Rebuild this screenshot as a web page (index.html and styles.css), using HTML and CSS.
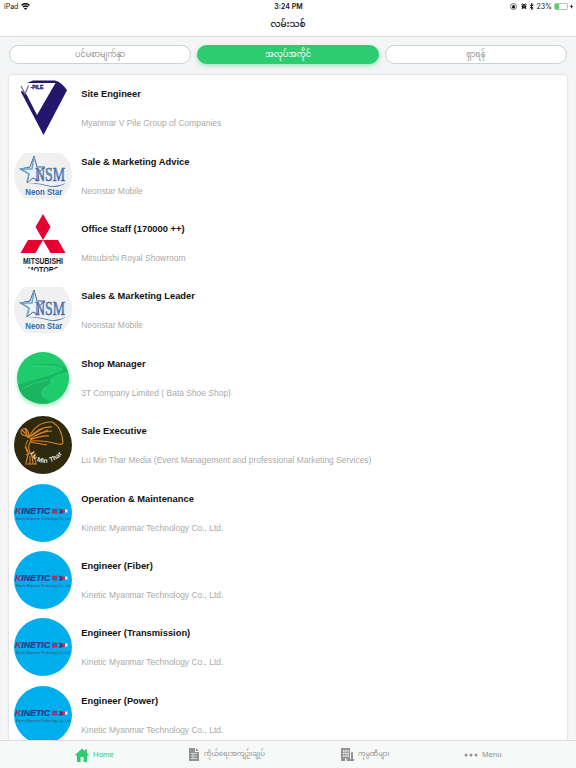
FILE: index.html
```html
<!doctype html>
<html lang="my">
<head>
<meta charset="utf-8">
<title>လမ်းသစ်</title>
<link rel="stylesheet" href="styles.css">
</head>
<body>
<svg class="symbols">
	<linearGradient id="nsm" x1="0" y1="0" x2="0" y2="1">
		<stop offset="0.2" stop-color="#53699f"/>
		<stop offset="0.55" stop-color="#6ba5ce"/>
		<stop offset="0.8" stop-color="#244a91"/>
	</linearGradient>
	<symbol id="neonstar" viewBox="0 0 58 58">
		<path d="M10 6h38q10 10 10 22t-10 23q-19 3-38 0Q0 40 0 28T10 6z" fill="#f0f0f1"/>
		<path d="M20 9l3 11 8 0-7 6 1 8-6-3-6 5 2-9-9-5 10-2z" fill="#e8f2fa" stroke="#496396" stroke-width="1"/>
		<path d="M20 10l-2 12-11 0 8 5-2 8" fill="none" stroke="#6ba5ce" stroke-width="1.500"/>
		<text x="21" y="33.500" class="nsm" textLength="30" lengthAdjust="spacingAndGlyphs">NSM</text>
		<path d="M14 37q9-2 18 1t20-2q-9 6-19 3t-19-2z" fill="#426fa9"/>
		<text x="11.300" y="48.300" class="neon" textLength="37" lengthAdjust="spacingAndGlyphs">Neon Star</text>
	</symbol>
	<symbol id="kinetic" viewBox="0 0 58 58">
		<circle cx="29" cy="29" r="29" fill="#00aeee"/>
		<text x="1" y="30" class="kinetic" textLength="35" lengthAdjust="spacingAndGlyphs"><tspan fill="#a73159">K</tspan>INETIC</text>
		<path d="M38 25.500h5.500M38 28.700h5.500" stroke="#a93255" stroke-width="1.500"/>
		<path d="M38 27h5.500" stroke="#303488" stroke-width=".900"/>
		<path d="M44.500 24.500l5 1.500v3l-5 1 1.500-2.700z" fill="#303488"/>
		<path d="M48 25.500h3v3h-3z" fill="#c52b4a"/>
		<path d="M51 25.500h2.500v3H51z" fill="#dcf1fa"/>
		<text x="2" y="35.500" class="kinetic-sub" textLength="54" lengthAdjust="spacingAndGlyphs">Kinetic Myanmar Technology Co., Ltd</text>
	</symbol>
</svg>

<div class="header">
	<div class="status">
		<div class="status-left">
			<span>iPad</span>
			<svg class="wifi" viewBox="0 0 16 12"><path d="M1 4q7-6 14 0M3.500 7q4.500-4 9 0" fill="none" stroke="#111" stroke-width="2.600"/><path d="M5 9q3-2 6 0l-3 3z" fill="#111"/></svg>
		</div>
		<div class="clock">3:24 PM</div>
		<div class="status-right">
			<svg class="lock" viewBox="0 0 12 12"><circle cx="6" cy="6" r="5" fill="none" stroke="#111"/><path d="M3.500 5.500h5v3.500h-5zM4.500 5.500V4q1.500-2 3 0v1.500" fill="#111"/></svg>
			<svg class="alarm" viewBox="0 0 12 12"><circle cx="6" cy="6.500" r="4.600" fill="#111"/><path d="M1 3l2-2M9 1l2 2M3 10l-1 2M9 10l1 2" stroke="#111" stroke-width="2"/><path d="M4 5l2 2 3-3" fill="none" stroke="#fff" stroke-width="1.200"/></svg>
			<svg class="bluetooth" viewBox="0 0 8 12"><path d="M1 3l6 6-3 2.500V.500L7 3 1 9" fill="none" stroke="#111" stroke-width="1.500"/></svg>
			<span>23%</span>
			<span class="battery"><span class="battery-level" style="width: 23%"></span></span>
			<svg class="bolt" viewBox="0 0 6 10"><path d="M4 0L0 6h2.500L2 10l4-6H3.500z" fill="#111"/></svg>
		</div>
	</div>
	<div class="title">လမ်းသစ်</div>
</div>

<div class="tabs">
	<div class="tab">ပင်မစာမျက်နှာ</div>
	<div class="tab active">အလုပ်အကိုင်</div>
	<div class="tab">ရှာရန်</div>
</div>

<div class="list">
	<div class="job">
		<svg class="logo" viewBox="0 0 58 58">
			<path d="M8 9l5-5 6-2.500h22q7 2 12 9.800L29.500 56 7 13z" fill="#24156d"/>
			<path d="M8 4h33.500L23 36 12 14.500 6 11z" fill="#fff"/>
			<path d="M7 7l4 8 3.500-8.500" fill="none" stroke="#7b6d9c" stroke-width="1.300"/>
			<text x="16.500" y="9.600" class="vpile" textLength="13" lengthAdjust="spacingAndGlyphs">-PILE</text>
		</svg>
		<div class="info">
			<div class="position">Site Engineer</div>
			<div class="company">Myanmar V Pile Group of Companies</div>
		</div>
	</div>
	<div class="job">
		<svg class="logo"><use href="#neonstar"/></svg>
		<div class="info">
			<div class="position">Sale &amp; Marketing Advice</div>
			<div class="company">Neonstar Mobile</div>
		</div>
	</div>
	<div class="job">
		<svg class="logo" viewBox="0 0 58 58">
			<clipPath id="round"><circle cx="29" cy="28.500" r="29.500"/></clipPath>
			<g clip-path="url(#round)">
				<path d="M29 0l7.500 13L29 26l-7.500-13zM29 26l-7.500 13H6.500L14 26zM29 26h15l7.500 13h-15z" fill="#e60032"/>
				<text x="9" y="49.500" class="mitsubishi" textLength="40" lengthAdjust="spacingAndGlyphs">MITSUBISHI</text>
				<text x="13.500" y="58.500" class="mitsubishi" textLength="31" lengthAdjust="spacingAndGlyphs">MOTORS</text>
			</g>
		</svg>
		<div class="info">
			<div class="position">Office Staff (170000 ++)</div>
			<div class="company">Mitsubishi Royal Showroom</div>
		</div>
	</div>
	<div class="job">
		<svg class="logo"><use href="#neonstar"/></svg>
		<div class="info">
			<div class="position">Sales &amp; Marketing Leader</div>
			<div class="company">Neonstar Mobile</div>
		</div>
	</div>
	<div class="job">
		<svg class="logo road" viewBox="0 0 58 58">
			<circle cx="29" cy="29" r="26" fill="#20cb6b"/>
			<path d="M17 16q22-1 31 2 4 3-4 5.500-8 3-17 5.500Q14 32 4 36q2 13 15 17 10 3 19 0-12-6-11-10 2-5 10-8-4-4 3-7 7-4 14-5l-2-4q-4-3-12-4-8-1-23 1z" fill="#19b560"/>
			<path d="M18 17q22 0 24 3 1 3-6 5M8 40q12-7 26-9M53 24q-14 2-15 6 0 2 2 4-13 6-12 10 0 4 8 9" fill="none" stroke="#2bd17b" stroke-width=".900"/>
		</svg>
		<div class="info">
			<div class="position">Shop Manager</div>
			<div class="company">3T Company Limited ( Bata Shoe Shop)</div>
		</div>
	</div>
	<div class="job">
		<svg class="logo" viewBox="0 0 58 58">
			<circle cx="29" cy="29" r="29" fill="#2f2a0e"/>
			<g fill="none" stroke="#d98226" stroke-width="1.100">
				<path d="M15 21Q23 5 38 6q10 5 11 21-1 2-5 1M15 22Q26 10 38 11M16 23q12-8 22-8M16 24q12-5 19-4M16 25q12-1 28 3M16 26l17 3M14 22L11 12M13 20q-7-1-6-5 2-4 6-1 3 4 1 8M8 14l5 5M12 12l1 9M14 24q-5 7 1 14M16 26q-3 6 1 12M14 39l-2 8M16 40v8M18 40l1 8M20 39l2 9M11 48h12M12 39q5-3 10 0"/>
				<path d="M11 31q4 4 3 9M17 20l12-8M20 20l14-6"/>
			</g>
			<path id="arc" d="M16 37Q22 49 34 46.500T51 33" fill="none"/>
			<text class="lumin"><textPath href="#arc" textLength="39" lengthAdjust="spacing">Lu Min Thar</textPath></text>
		</svg>
		<div class="info">
			<div class="position">Sale Executive</div>
			<div class="company">Lu Min Thar Media (Event Management and professional Marketing Services)</div>
		</div>
	</div>
	<div class="job">
		<svg class="logo"><use href="#kinetic"/></svg>
		<div class="info">
			<div class="position">Operation &amp; Maintenance</div>
			<div class="company">Kinetic Myanmar Technology Co., Ltd.</div>
		</div>
	</div>
	<div class="job">
		<svg class="logo"><use href="#kinetic"/></svg>
		<div class="info">
			<div class="position">Engineer (Fiber)</div>
			<div class="company">Kinetic Myanmar Technology Co., Ltd.</div>
		</div>
	</div>
	<div class="job">
		<svg class="logo"><use href="#kinetic"/></svg>
		<div class="info">
			<div class="position">Engineer (Transmission)</div>
			<div class="company">Kinetic Myanmar Technology Co., Ltd.</div>
		</div>
	</div>
	<div class="job">
		<svg class="logo"><use href="#kinetic"/></svg>
		<div class="info">
			<div class="position">Engineer (Power)</div>
			<div class="company">Kinetic Myanmar Technology Co., Ltd.</div>
		</div>
	</div>
</div>

<div class="bottom-bar">
	<div class="nav home">
		<svg width="14" height="14" viewBox="0 0 14 14"><path d="M7 .500L0 7l1 1 1-.800V14h3.500V9h3v5H12V7.200l1 .800 1-1-2-2V1.500h-2v1.700z"/></svg>
		<span>Home</span>
	</div>
	<div class="nav profile">
		<svg width="10" height="13" viewBox="0 0 10 13"><path d="M0 0h6v4h4v9H0zM7 0l3 3H7z"/><path d="M2 5.500h6M2 8h6M2 10.500h6M4 5v6" stroke="#f7f8f8" stroke-width=".600"/></svg>
		<span class="small">ကိုယ်ရေးအကျဉ်းချုပ်</span>
	</div>
	<div class="nav companies">
		<svg width="13" height="13" viewBox="0 0 13 13"><path d="M0 0h9v11h1V5q1-3 2 0v6h1v2H0z"/><path d="M2 3h6M2 5.500h6M2 8h6" stroke="#f7f8f8" stroke-width="1.500" stroke-dasharray="1.500 .700"/><path d="M4 10.500h1.500V13H4z" fill="#f7f8f8"/></svg>
		<span class="small">ကုမ္ပဏီများ</span>
	</div>
	<div class="nav menu">
		<svg width="14" height="4" viewBox="0 0 14 4"><circle cx="2" cy="2" r="1.500"/><circle cx="7" cy="2" r="1.500"/><circle cx="12" cy="2" r="1.500"/></svg>
		<span>Menu</span>
	</div>
</div>
</body>
</html>
```

FILE: styles.css
```css
* {
	box-sizing: border-box;
}

body {
	margin: 0;
	width: 576px;
	height: 768px;
	display: flex;
	flex-direction: column;
	overflow: hidden;
	font-family: "Liberation Sans", "Noto Sans Myanmar", "Padauk", sans-serif;
	background-color: #f3f5f6;
	color: #111;
}

svg {
	display: block;
	flex: none;
}

.symbols {
	width: 0;
	height: 0;
}

.header {
	flex: none;
	height: 37px;
	background-color: #fff;
	border-bottom: 1px solid #d9dada;
}

.status {
	display: grid;
	grid-template-columns: 1fr auto 1fr;
	align-items: center;
	height: 12px;
	padding: 0 3px 0 4px;
	font-family: Inter, sans-serif;
	font-size: 7px;
}

.status-left {
	display: flex;
	align-items: center;
	gap: 3px;
}

.wifi {
	width: 9px;
	height: 7px;
}

.clock {
	font-weight: 600;
}

.status-right {
	display: flex;
	align-items: center;
	justify-content: flex-end;
	gap: 2.5px;
}

.lock {
	width: 7px;
	height: 7px;
	margin-right: 1px;
}

.alarm {
	width: 6px;
	height: 6px;
}

.bluetooth {
	width: 5px;
	height: 7px;
}

.battery {
	width: 14px;
	height: 7px;
	margin-left: -1px;
	padding: 1px;
	border: 1px solid #b9bdb9;
	border-radius: 2px;
	display: flex;
}

.battery-level {
	background-color: #4cd964;
	box-shadow: 0 0 0 1px #4cd964;
}

.bolt {
	width: 3px;
	height: 5px;
}

.title {
	line-height: 24px;
	font-size: 8.9px;
	text-align: center;
	-webkit-text-stroke: 0.15px #111;
}

.tabs {
	flex: none;
	display: grid;
	grid-template-columns: repeat(3, 1fr);
	gap: 5.5px;
	padding: 8px 9px 0;
	height: 37.5px;
}

.tab {
	height: 18.5px;
	line-height: 18px;
	border: 1px solid #ccd1d1;
	border-radius: 10px;
	font-size: 8px;
	text-align: center;
	color: #999;
	background-color: #fff;
}

.tab.active {
	color: #fff;
	border-color: #2ecc71;
	background-color: #2ecc71;
	box-shadow: 0 2px 4px rgba(46,204,113,0.4);
}

.list {
	flex: 1;
	min-height: 0;
	margin: 0 9px;
	overflow: hidden;
	background-color: #fff;
	border-radius: 2px 2px 0 0;
	box-shadow: 0 0 2px rgba(0,0,0,0.25);
}

.job {
	display: flex;
	align-items: center;
	height: 67.4px;
	padding-left: 5px;
}

.logo {
	width: 58px;
	height: 58px;
	overflow: visible;
}

.road {
	filter: drop-shadow(0 2px 2px rgba(46,204,113,0.45));
}

.info {
	margin-left: 9.2px;
	padding-top: 1px;
	white-space: nowrap;
}

.position {
	font-size: 9.35px;
	font-weight: bold;
	line-height: 14px;
	color: #111;
}

.company {
	margin-top: 15px;
	font-size: 8.46px;
	line-height: 14px;
	color: #aaa;
}

.nsm {
	font: 19px "Liberation Serif", serif;
	fill: url(#nsm);
	stroke: #426fa9;
	stroke-width: 0.6px;
}

.neon {
	font: bold 8.5px "Liberation Sans", sans-serif;
	fill: #326da5;
}

.kinetic {
	font: italic bold 8.5px "Liberation Sans", sans-serif;
	fill: #29388b;
	stroke: #29388b;
	stroke-width: 0.2px;
}

.kinetic-sub {
	font: italic bold 3.8px "Liberation Sans", sans-serif;
	fill: #376589;
}

.vpile {
	font: bold 4.8px "Liberation Sans", sans-serif;
	fill: #24156d;
	stroke: #24156d;
	stroke-width: 0.3px;
}

.mitsubishi {
	font: bold 9.5px "Liberation Sans", sans-serif;
	fill: #191919;
}

.lumin {
	font: bold 6.5px "Liberation Sans", sans-serif;
	fill: #eee9d5;
}

.bottom-bar {
	flex: none;
	height: 28px;
	display: grid;
	grid-template-columns: 187px 151px 107px 131px;
	align-items: center;
	background-color: #f7f8f8;
	border-top: 1px solid #dcdddd;
	position: relative;
}

.nav {
	display: flex;
	align-items: center;
	gap: 4px;
	font-size: 7.8px;
	color: #919191;
	fill: #929292;
	white-space: nowrap;
}

.small {
	font-size: 6.6px;
}

.home {
	padding-left: 75px;
	color: #2ecc71;
	fill: #2ecc71;
}

.profile {
	padding-left: 2px;
	gap: 5px;
}

.companies {
	padding-left: 3px;
}

.menu {
	padding-left: 19px;
}
```
